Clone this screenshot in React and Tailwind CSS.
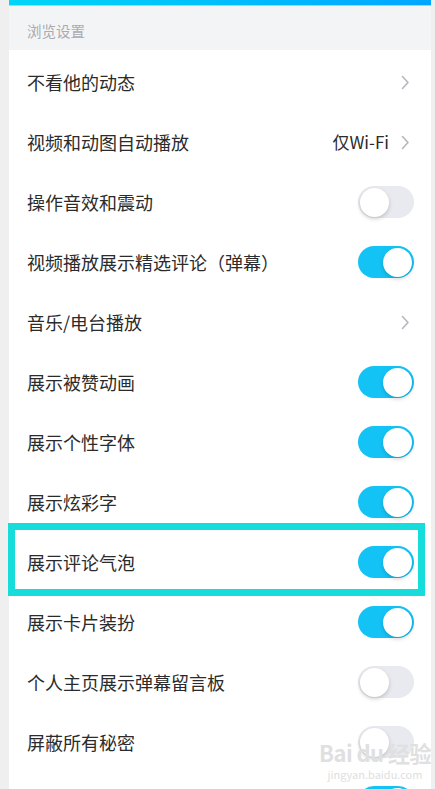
import React from "react";

const rows = [
  { label: "不看他的动态", type: "link" },
  { label: "视频和动图自动播放", type: "link", value: "仅Wi-Fi" },
  { label: "操作音效和震动", type: "toggle", on: false },
  { label: "视频播放展示精选评论（弹幕）", type: "toggle", on: true },
  { label: "音乐/电台播放", type: "link" },
  { label: "展示被赞动画", type: "toggle", on: true },
  { label: "展示个性字体", type: "toggle", on: true },
  { label: "展示炫彩字", type: "toggle", on: true },
  { label: "展示评论气泡", type: "toggle", on: true, marked: true },
  { label: "展示卡片装扮", type: "toggle", on: true },
  { label: "个人主页展示弹幕留言板", type: "toggle", on: false },
  { label: "屏蔽所有秘密", type: "toggle", on: false },
  { label: "", type: "toggle", on: true },
];

const Chevron = () => (
  <svg width="9" height="15" viewBox="0 0 9 15" fill="none">
    <path
      d="M1.5 1.5 L7 7.5 L1.5 13.5"
      stroke="#b4b8be"
      strokeWidth="1.6"
      strokeLinecap="round"
      strokeLinejoin="round"
    />
  </svg>
);

const Toggle = ({ on }) => (
  <div
    className={`w-[56px] h-[32px] rounded-full p-[2px] flex items-center ${
      on ? "bg-[#14c3f6] justify-end" : "bg-[#e9eaef] justify-start"
    }`}
  >
    <div className="w-[29px] h-[29px] rounded-full bg-white shadow-[0_2px_4px_rgba(0,0,0,0.18)]" />
  </div>
);

const Row = ({ row }) => (
  <div className="relative h-[60px] flex items-center justify-between pl-[18px] pr-[17px]">
    <span className="text-[18px] text-[#2b2b2b]">{row.label}</span>
    {row.type === "link" ? (
      <div className="flex items-center gap-[12px] pr-[4px]">
        {row.value && (
          <span className="text-[17px] text-[#2b2b2b]">{row.value}</span>
        )}
        <Chevron />
      </div>
    ) : (
      <Toggle on={row.on} />
    )}
    {row.marked && (
      <div className="absolute left-[-1px] right-[6px] top-[-9px] bottom-[-4px] border-[7px] border-[#16dcdc]" />
    )}
  </div>
);

const App = () => {
  return (
    <div
      className="w-[435px] h-[789px] overflow-hidden bg-[#efefef] pl-[9px] pr-[4px]"
      style={{ fontFamily: '"Noto Sans CJK SC", "Noto Sans", sans-serif' }}
    >
      <div className="relative h-full bg-white">
        <div className="h-[5px] bg-gradient-to-r from-[#00d6f6] to-[#00a6ff]" />
        <div className="h-[1px] bg-[#8fdcff]" />
        <div className="h-[44px] bg-[#f3f4f6] flex items-end pb-[8px] pl-[18px]">
          <span className="text-[14.5px] text-[#a9abb0]">浏览设置</span>
        </div>
        <div className="flex flex-col pt-[2px]">
          {rows.map((row, i) => (
            <Row key={i} row={row} />
          ))}
        </div>

        {/* watermark */}
        <div className="absolute left-[310px] top-[740px] flex flex-col items-center gap-[4px] text-[#e0e0e0]">
          <span className="text-[22px] leading-[24px] font-bold tracking-tight">Bai du 经验</span>
          <span className="text-[11px] leading-[12px]">jingyan.baidu.com</span>
        </div>
      </div>
    </div>
  );
};

export default App;
